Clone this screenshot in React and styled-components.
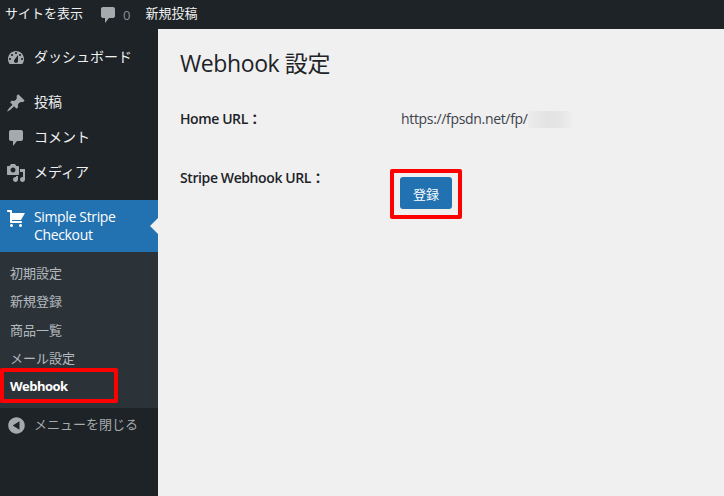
import React from "react";
import styled, { createGlobalStyle } from "styled-components";

const GlobalStyle = createGlobalStyle`
  html, body {
    margin: 0;
    padding: 0;
    height: 100%;
    background: #f0f0f1;
    font-family: "Open Sans", "Noto Sans CJK JP", sans-serif;
    font-size: 14px;
    color: #1d2327;
  }
`;

const icons = {
  dashboard:
    "M3.76 16h12.48c1.1-1.37 1.76-3.11 1.76-5 0-4.42-3.58-8-8-8s-8 3.58-8 8c0 1.89.66 3.63 1.76 5zM10 4c.55 0 1 .45 1 1s-.45 1-1 1-1-.45-1-1 .45-1 1-1zM6 6c.55 0 1 .45 1 1s-.45 1-1 1-1-.45-1-1 .45-1 1-1zm8 0c.55 0 1 .45 1 1s-.45 1-1 1-1-.45-1-1 .45-1 1-1zm-5.37 5.55L12 7v6c0 1.1-.9 2-2 2s-2-.9-2-2c0-.57.24-1.08.63-1.45zM4 10c.55 0 1 .45 1 1s-.45 1-1 1-1-.45-1-1 .45-1 1-1zm12 0c.55 0 1 .45 1 1s-.45 1-1 1-1-.45-1-1 .45-1 1-1z",
  pin: "M10.44 3.02l1.82-1.82 6.36 6.35-1.83 1.82c-1.05-.68-2.48-.57-3.41.36l-.75.75c-.92.93-1.04 2.35-.35 3.41l-1.83 1.82-2.41-2.41-2.8 2.79c-.42.42-3.38 2.71-3.8 2.29s1.86-3.39 2.28-3.81l2.79-2.79L4.1 9.36l1.83-1.82c1.05.69 2.48.57 3.4-.36l.75-.75c.93-.92 1.05-2.35.36-3.41z",
  comment:
    "M5 2h10c1.1 0 2 .9 2 2v7c0 1.1-.9 2-2 2h-4l-4 5v-5H5c-1.1 0-2-.9-2-2V4c0-1.1.9-2 2-2z",
  media:
    "M13 11V4c0-.55-.45-1-1-1h-1.67L9 1H5L3.67 3H2c-.55 0-1 .45-1 1v7c0 .55.45 1 1 1h10c.55 0 1-.45 1-1zM7 4.5c1.38 0 2.5 1.12 2.5 2.5S8.38 9.5 7 9.5 4.5 8.38 4.5 7 5.62 4.5 7 4.5zM14 6h5v10.5c0 1.38-1.12 2.5-2.5 2.5S14 17.88 14 16.5s1.12-2.5 2.5-2.5c.17 0 .34.02.5.05V9h-3V6zm-4 8.05V13h2v3.5c0 1.38-1.12 2.5-2.5 2.5S7 17.88 7 16.5 8.12 14 9.5 14c.17 0 .34.02.5.05z",
  cart: "M6 13h9c.55 0 1 .45 1 1s-.45 1-1 1H5c-.55 0-1-.45-1-1V4H2c-.55 0-1-.45-1-1s.45-1 1-1h3c.55 0 1 .45 1 1v2h13l-4 7H6v1zm-.5 3c.83 0 1.5.67 1.5 1.5S6.33 19 5.5 19 4 18.33 4 17.5 4.67 16 5.5 16zm9 0c.83 0 1.5.67 1.5 1.5s-.67 1.5-1.5 1.5-1.5-.67-1.5-1.5.67-1.5 1.5-1.5z",
  collapse:
    "M10 .3c5.4 0 9.7 4.3 9.7 9.7s-4.3 9.7-9.7 9.7S.3 15.4.3 10 4.6.3 10 .3zM13.5 15V5l-8 5z",
};

const Icon = ({ name, color = "#a7aaad", size = 20 }) => (
  <svg width={size} height={size} viewBox="0 0 20 20" fill={color} fillRule="evenodd">
    <path d={icons[name]} />
  </svg>
);

const Page = styled.div`
  width: 724px;
  height: 496px;
  overflow: hidden;
  display: flex;
  flex-direction: column;
`;

const AdminBar = styled.div`
  height: 29px;
  flex: none;
  background: #1d2327;
  display: flex;
  align-items: center;
  padding-left: 5px;
  font-size: 13px;
  color: #f0f0f1;
`;

const BarLink = styled.span`
  line-height: 27px;
  margin-bottom: 2px;
`;

const BarComments = styled.span`
  display: flex;
  align-items: center;
  gap: 5px;
  margin: 0 15px 0 15px;
  color: #8c8f94;
  font-size: 13px;
`;

const Body = styled.div`
  flex: 1;
  display: flex;
  min-height: 0;
`;

const Sidebar = styled.nav`
  width: 158px;
  flex: none;
  background: #1d2327;
  padding-top: 11px;
  display: flex;
  flex-direction: column;
`;

const MenuRow = styled.div`
  height: 35px;
  display: flex;
  align-items: center;
  padding-left: 6px;
  gap: 8px;
  color: #f0f0f1;
  margin-bottom: ${(p) => p.$gap || 0}px;
`;

const MenuLabel = styled.span`
  margin-bottom: 3px;
`;

const ActiveRow = styled.div`
  position: relative;
  height: 52px;
  margin-top: 10px;
  display: flex;
  align-items: flex-start;
  padding: 8px 0 0 6px;
  gap: 8px;
  box-sizing: border-box;
  background: #2271b1;
  color: #fff;
  line-height: 18px;
  letter-spacing: -0.35px;

  &::after {
    content: "";
    position: absolute;
    right: 0;
    top: 18px;
    border: 8px solid transparent;
    border-right-color: #f0f0f1;
    border-left-width: 0;
  }
`;

const SubMenu = styled.div`
  background: #2c3338;
  padding: 7px 0;
  height: 156px;
  box-sizing: border-box;
`;

const SubItem = styled.div`
  position: relative;
  height: 28.3px;
  line-height: 28.3px;
  padding-left: 10px;
  font-size: 13px;
  font-weight: ${(p) => (p.$current ? 700 : 400)};
  letter-spacing: ${(p) => (p.$current ? "-0.5px" : "0")};
  color: ${(p) => (p.$current ? "#fff" : "rgba(240,246,252,0.7)")};
`;

const CollapseRow = styled.div`
  height: 34px;
  display: flex;
  align-items: center;
  padding-left: 8px;
  gap: 9px;
  font-size: 13px;
  color: #a7aaad;
`;

const Highlight = styled.span`
  position: absolute;
  border: 4px solid #ff0000;
  border-radius: 2px;
  box-sizing: border-box;
  left: ${(p) => p.$left}px;
  top: ${(p) => p.$top}px;
  width: ${(p) => p.$width}px;
  height: ${(p) => p.$height}px;
`;

const Content = styled.main`
  flex: 1;
  padding: 18px 22px;
`;

const Title = styled.h1`
  margin: 0 0 22px;
  font-size: 23px;
  font-weight: 400;
  line-height: 32px;
  letter-spacing: -0.4px;
  color: #1d2327;
`;

const FormGrid = styled.div`
  display: grid;
  grid-template-columns: 220px 1fr;
  grid-auto-rows: 59px;
  align-items: start;
`;

const Label = styled.div`
  font-weight: 600;
  line-height: 20px;
  padding-top: 8px;
  letter-spacing: -0.4px;
`;

const Value = styled.div`
  line-height: 20px;
  padding: 8px 0 0 1px;
  color: #3c434a;
  display: flex;
  align-items: center;
  letter-spacing: -0.33px;
`;

const Blurred = styled.span`
  width: 44px;
  height: 17px;
  background: linear-gradient(90deg, #ececec, #e3e3e3 45%, #e6e6e6 75%, #eeeeee);
`;

const ButtonCell = styled.div`
  position: relative;
  padding-top: 17px;
`;

const SubmitButton = styled.button`
  display: block;
  width: 52px;
  height: 32px;
  border: 0;
  border-radius: 3px;
  background: #2271b1;
  color: #fff;
  font: inherit;
  font-size: 13px;
  padding: 0;
`;

export default function App() {
  return (
    <Page>
      <GlobalStyle />
      <AdminBar>
        <BarLink>サイトを表示</BarLink>
        <BarComments>
          <Icon name="comment" color="#a7aaad" />
          <span>0</span>
        </BarComments>
        <BarLink>新規投稿</BarLink>
      </AdminBar>
      <Body>
        <Sidebar>
          <MenuRow $gap={10}>
            <Icon name="dashboard" />
            <MenuLabel>ダッシュボード</MenuLabel>
          </MenuRow>
          <MenuRow>
            <Icon name="pin" />
            <MenuLabel>投稿</MenuLabel>
          </MenuRow>
          <MenuRow>
            <Icon name="comment" />
            <MenuLabel>コメント</MenuLabel>
          </MenuRow>
          <MenuRow>
            <Icon name="media" />
            <MenuLabel>メディア</MenuLabel>
          </MenuRow>
          <ActiveRow>
            <Icon name="cart" color="#fff" />
            <span>
              Simple Stripe
              <br />
              Checkout
            </span>
          </ActiveRow>
          <SubMenu>
            <SubItem>初期設定</SubItem>
            <SubItem>新規登録</SubItem>
            <SubItem>商品一覧</SubItem>
            <SubItem>メール設定</SubItem>
            <SubItem $current>
              Webhook
              <Highlight $left={0} $top={-4} $width={118} $height={35} />
            </SubItem>
          </SubMenu>
          <CollapseRow>
            <Icon name="collapse" size={17} />
            <MenuLabel>メニューを閉じる</MenuLabel>
          </CollapseRow>
        </Sidebar>
        <Content>
          <Title>Webhook 設定</Title>
          <FormGrid>
            <Label>Home URL：</Label>
            <Value>
              https://fpsdn.net/fp/
              <Blurred />
            </Value>
            <Label>Stripe Webhook URL：</Label>
            <ButtonCell>
              <SubmitButton>登録</SubmitButton>
              <Highlight $left={-10} $top={9} $width={72} $height={50} />
            </ButtonCell>
          </FormGrid>
        </Content>
      </Body>
    </Page>
  );
}
